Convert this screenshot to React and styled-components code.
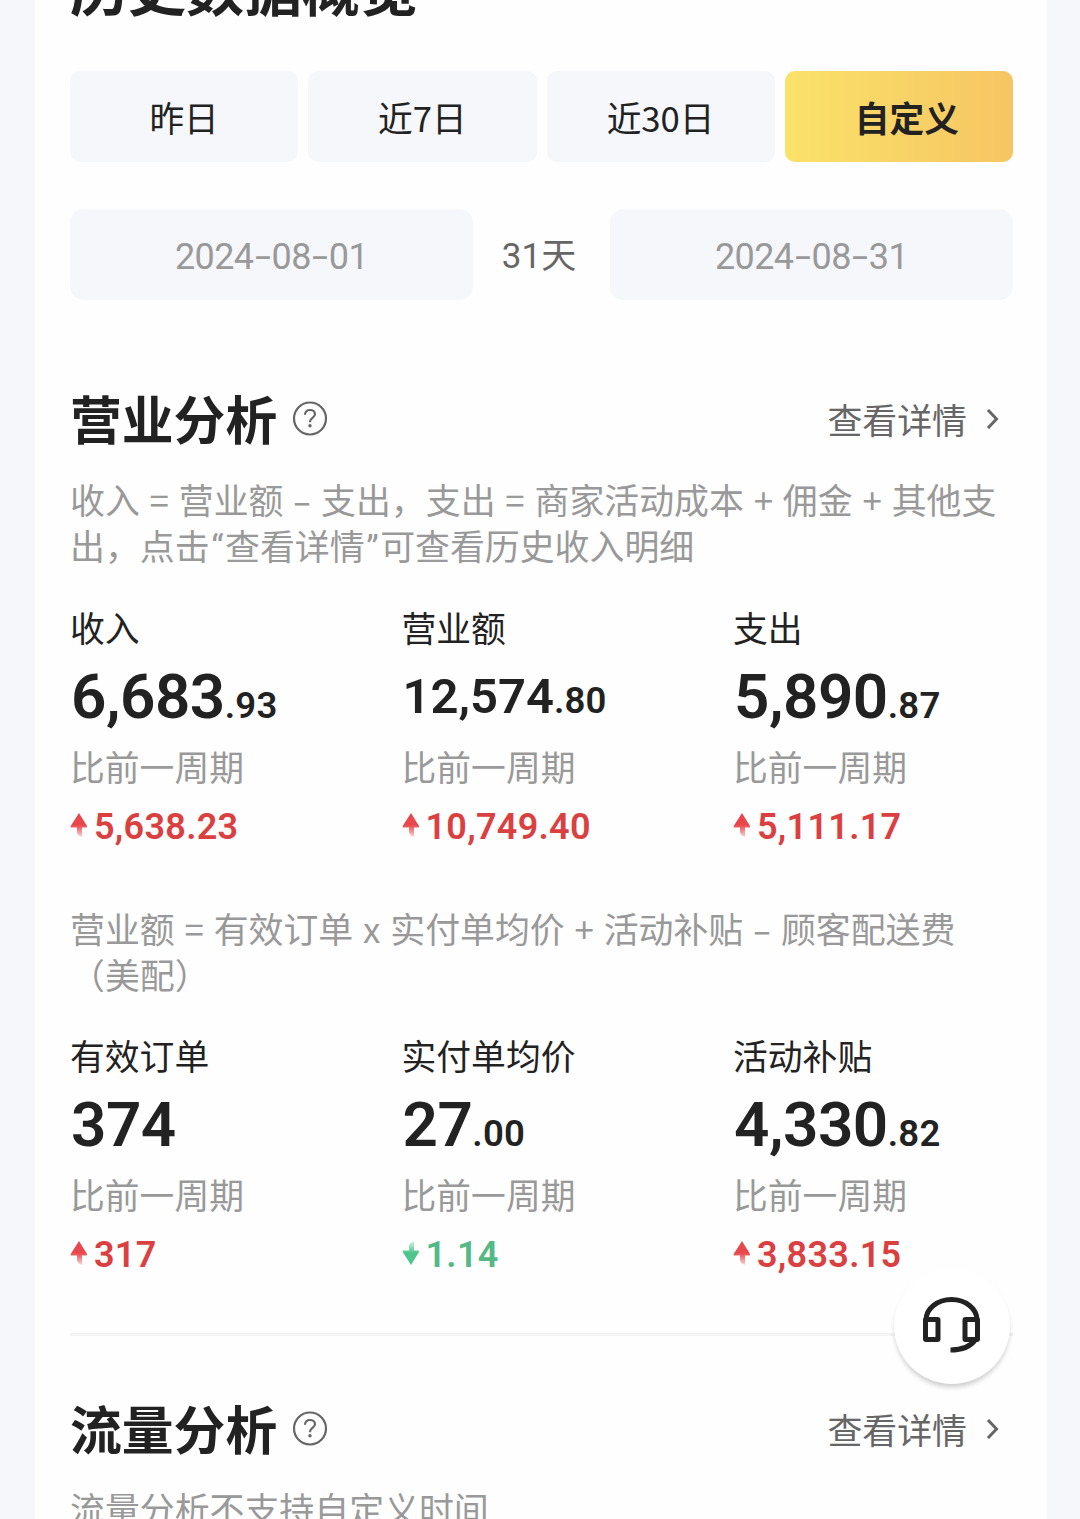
import styled, { createGlobalStyle } from "styled-components";

const GlobalStyle = createGlobalStyle`
    * {
        box-sizing: border-box;
    }
    body {
        margin: 0;
        background: #f5f7fb;
        font-family: Roboto, "Noto Sans CJK SC", sans-serif;
        color: #222;
    }
`;

const Page = styled.div`
    height: 1519px;
    padding: 0 33px 0 35px;
    overflow: hidden;
    position: relative;
`;

const Card = styled.main`
    height: 100%;
    padding: 0 34px 0 35px;
    background: #fefefe;
    overflow: hidden;
`;

const PageTitle = styled.h1`
    margin: -43px 0 56px;
    font-size: 58px;
    line-height: 58px;
    font-weight: 700;
    font-family: "Noto Sans CJK SC", sans-serif;
`;

const Tabs = styled.div`
    display: grid;
    grid-template-columns: repeat(4, 1fr);
    gap: 10px;
`;

const Tab = styled.button`
    height: 91px;
    padding: ${(props) => (props.$active ? "1px 0 0 16px" : "1px 0 0")};
    border: 0;
    border-radius: 10px;
    font-family: "Noto Sans CJK SC", sans-serif;
    font-size: 34.7px;
    line-height: 90px;
    font-weight: ${(props) => (props.$active ? 700 : 400)};
    color: #222;
    background: ${(props) => (props.$active ? "linear-gradient(90deg, #fae26a, #f6c562)" : "#f5f7fb")};
`;

const DateRow = styled.div`
    display: flex;
    align-items: center;
    margin-top: 47px;
`;

const DateBox = styled.div`
    width: 403px;
    height: 91px;
    border-radius: 14px;
    background: #f5f7fb;
    color: #999;
    font-size: 36px;
    line-height: 96px;
    text-align: center;
    letter-spacing: -0.6px;
`;

const Dash = styled.span`
    display: inline-block;
    width: 18px;
    line-height: 1;
    text-align: center;
    letter-spacing: 0;
    transform: scaleX(1.6);
`;

const Quote = styled.span`
    display: inline-block;
    width: 15.5px;
    font-family: Roboto, sans-serif;
    line-height: 1;
    text-align: center;
`;

const Days = styled.div`
    flex: 1;
    padding: 0 5px 4px 0;
    text-align: center;
    font-size: 35px;
    color: #666;
`;

const SectionHead = styled.div`
    display: flex;
    align-items: center;
    height: 60px;
    margin-top: ${(props) => props.$top}px;
`;

const SectionTitle = styled.h2`
    margin: 0 15px 0 0;
    padding-bottom: 3px;
    font-family: "Noto Sans CJK SC", sans-serif;
    font-size: 51.8px;
    line-height: 57px;
    font-weight: 700;
`;

const DetailLink = styled.a`
    display: flex;
    align-items: center;
    gap: 19px;
    margin-left: auto;
    padding-right: 14px;
    font-family: "Noto Sans CJK SC", sans-serif;
    font-size: 34.9px;
    line-height: 60px;
    color: #666;
`;

const Description = styled.p`
    margin: ${(props) => props.$top}px -10px 0 0;
    font-family: "Noto Sans CJK SC", sans-serif;
    font-size: 34.9px;
    line-height: 46px;
    word-spacing: 2px;
    color: #999;
    white-space: nowrap;
`;

const Metrics = styled.div`
    display: grid;
    grid-template-columns: 331.5px 331.5px 1fr;
    margin-top: ${(props) => props.$top}px;
`;

const Label = styled.div`
    font-family: "Noto Sans CJK SC", sans-serif;
    font-size: 34.8px;
    line-height: 46px;
    color: ${(props) => (props.$muted ? "#999" : "#222")};
`;

const Value = styled.div`
    height: 93px;
    padding-left: 1px;
    font-size: ${(props) => (props.$compact ? 49 : 62)}px;
    line-height: 93px;
    font-weight: 600;
    letter-spacing: ${(props) => (props.$compact ? 0 : -0.5)}px;
    white-space: nowrap;
`;

const Decimal = styled.span`
    font-size: 36.5px;
    line-height: 1;
    letter-spacing: 0.2px;
`;

const Change = styled.div`
    display: flex;
    align-items: center;
    gap: 6px;
    height: 46px;
    padding-top: 4px;
    margin-top: 13px;
    font-size: 36px;
    font-weight: 600;
    letter-spacing: 0.3px;
    color: ${(props) => (props.$down ? "#55b987" : "#db4041")};

    svg {
        margin-bottom: 4px;
    }
`;

const Divider = styled.hr`
    height: 3px;
    margin: 57px 0 0;
    border: 0;
    background: #f3f3f3;
`;

const ServiceButton = styled.button`
    position: absolute;
    left: 894px;
    top: 1268px;
    width: 116px;
    height: 116px;
    padding: 0;
    border: 0;
    border-radius: 50%;
    background: #fff;
    box-shadow: 0 4px 5px -1px rgba(0, 0, 0, 0.2);
    display: flex;
    align-items: center;
    justify-content: center;
`;

function HelpIcon() {
    return (
        <svg width="36" height="36" viewBox="0 0 36 36" fill="none" stroke="#666" strokeWidth="2.2">
            <circle cx="18" cy="17.500" r="16" />
            <path d="M13 13.700c.2-3 2.200-4.700 5-4.700s5 1.700 5 4.300c0 3.400-5 3.700-5 7.200v.8" />
            <circle cx="18" cy="24.700" r="1.700" fill="#666" stroke="none" />
        </svg>
    );
}

function ChevronIcon() {
    return (
        <svg width="13" height="22" viewBox="0 0 13 22" fill="none" stroke="#666" strokeWidth="3">
            <path d="M2 2l8.500 9L2 20" />
        </svg>
    );
}

function ArrowIcon({ down }) {
    const id = down ? "arrow-down" : "arrow-up";
    const color = down ? "#4fc58a" : "#e8474b";
    return (
        <svg width="18" height="26" viewBox="0 0 18 26" transform={down ? "scale(1 -1)" : undefined}>
            <defs>
                <linearGradient id={id} x1="0" y1="0" x2="0" y2="26" gradientUnits="userSpaceOnUse">
                    <stop offset="0.5" stopColor={color} />
                    <stop offset="1" stopColor={color} stopOpacity="0.15" />
                </linearGradient>
            </defs>
            <path d="M9 1L17 14Q17.500 15.500 16 15.500H12V20Q12 23 12.500 25Q8 24 7 20.500V15.500H1.500Q0 15.500 .7 14Z" fill={`url(#${id})`} />
        </svg>
    );
}

function HeadsetIcon() {
    return (
        <svg width="60" height="60" viewBox="0 0 60 60" fill="none" stroke="#222" strokeWidth="5">
            <path d="M4 24A25.500 20.500 0 0 1 55 24" />
            <rect x="3.500" y="23.500" width="12.500" height="20" rx="0.5" />
            <rect x="43" y="23.500" width="12.500" height="20" rx="0.5" />
            <path d="M53.500 43.500C49 50 41 54 28.500 54" />
        </svg>
    );
}

function Heading({ title, top }) {
    return (
        <SectionHead $top={top}>
            <SectionTitle>{title}</SectionTitle>
            <HelpIcon />
            <DetailLink>
                查看详情
                <ChevronIcon />
            </DetailLink>
        </SectionHead>
    );
}

function Metric({ label, whole, decimal, change, down, compact }) {
    return (
        <div>
            <Label>{label}</Label>
            <Value $compact={compact}>
                {whole}
                {decimal && <Decimal>.{decimal}</Decimal>}
            </Value>
            <Label $muted>比前一周期</Label>
            <Change $down={down}>
                <ArrowIcon down={down} />
                {change}
            </Change>
        </div>
    );
}

function DateField({ value }) {
    const [year, month, day] = value.split("-");
    return (
        <DateBox>
            {year}<Dash>-</Dash>{month}<Dash>-</Dash>{day}
        </DateBox>
    );
}

const tabs = ["昨日", "近7日", "近30日", "自定义"];

const income = [
    { label: "收入", whole: "6,683", decimal: "93", change: "5,638.23" },
    { label: "营业额", whole: "12,574", decimal: "80", change: "10,749.40", compact: true },
    { label: "支出", whole: "5,890", decimal: "87", change: "5,111.17" },
];

const orders = [
    { label: "有效订单", whole: "374", change: "317" },
    { label: "实付单均价", whole: "27", decimal: "00", change: "1.14", down: true },
    { label: "活动补贴", whole: "4,330", decimal: "82", change: "3,833.15" },
];

export default function App() {
    return (
        <Page>
            <GlobalStyle />
            <Card>
                <PageTitle>历史数据概览</PageTitle>
                <Tabs>
                    {tabs.map((tab) => (
                        <Tab key={tab} $active={tab === "自定义"}>{tab}</Tab>
                    ))}
                </Tabs>
                <DateRow>
                    <DateField value="2024-08-01" />
                    <Days>31天</Days>
                    <DateField value="2024-08-31" />
                </DateRow>

                <Heading title="营业分析" top={89} />
                <Description $top={27}>
                    收入 = 营业额 <Dash>-</Dash> 支出，支出 = 商家活动成本 + 佣金 + 其他支
                    <br />
                    出，点击<Quote>“</Quote>查看详情<Quote>”</Quote>可查看历史收入明细
                </Description>
                <Metrics $top={36}>
                    {income.map((item) => <Metric key={item.label} {...item} />)}
                </Metrics>

                <Description $top={57}>
                    营业额 = 有效订单 x 实付单均价 + 活动补贴 <Dash>-</Dash> 顾客配送费
                    <br />
                    （美配）
                </Description>
                <Metrics $top={35}>
                    {orders.map((item) => <Metric key={item.label} {...item} />)}
                </Metrics>
                <Divider />

                <Heading title="流量分析" top={63} />
                <Description $top={26}>流量分析不支持自定义时间</Description>
            </Card>
            <ServiceButton aria-label="客服">
                <HeadsetIcon />
            </ServiceButton>
        </Page>
    );
}
